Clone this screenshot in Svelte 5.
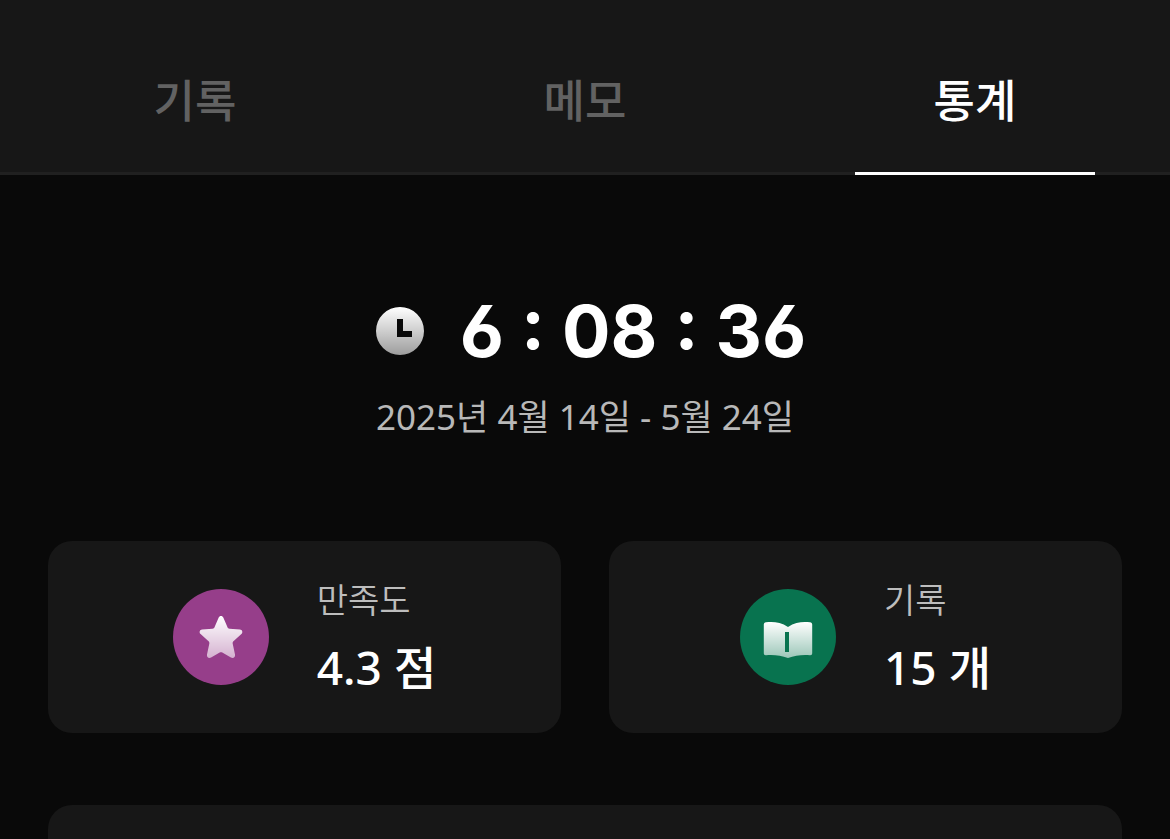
<script>
	let active = $state('stats');

	const tabs = [
		{ id: 'records', label: '기록' },
		{ id: 'memo', label: '메모' },
		{ id: 'stats', label: '통계' }
	];

	const cards = [
		{ icon: 'star', label: '만족도', value: '4.3 점' },
		{ icon: 'book', label: '기록', value: '15 개' }
	];
</script>

<div class="page">
	<div class="tabs" role="tablist">
		{#each tabs as tab}
			<button
				type="button"
				role="tab"
				class="tab"
				class:active={active === tab.id}
				aria-selected={active === tab.id}
				onclick={() => (active = tab.id)}
			>
				<span class="tab-label">{tab.label}</span>
			</button>
		{/each}
	</div>

	<main>
		<section class="summary">
			<div class="timer">
				<svg class="icon" viewBox="0 0 72 72" aria-hidden="true">
					<defs>
						<linearGradient id="clock-fill" x1="0" y1="0" x2="0" y2="1">
							<stop offset="0" stop-color="#fff" />
							<stop offset="1" stop-color="#fff" stop-opacity="0.6" />
						</linearGradient>
					</defs>
					<path
						fill="url(#clock-fill)"
						fill-rule="evenodd"
						d="M36 12a24 24 0 1 0 0 48a24 24 0 1 0 0-48zM33 24h6v12h9v6h-15z"
					/>
				</svg>
				<strong class="time">6 : 08 : 36</strong>
			</div>
			<p class="period">2025년 4월 14일 - 5월 24일</p>
		</section>

		<section class="cards">
			{#each cards as card}
				<article class="card">
					<div class="badge {card.icon}">
						<svg class="icon" viewBox="0 0 72 72" aria-hidden="true">
							{#if card.icon === 'star'}
								<defs>
									<linearGradient id="star-fill" x1="0" y1="0" x2="0" y2="1">
										<stop offset="0" stop-color="#fff" />
										<stop offset="1" stop-color="#fff" stop-opacity="0.6" />
									</linearGradient>
								</defs>
								<path
									fill="url(#star-fill)"
									d="M33.6 16.7C34.5 14.4 37.5 14.4 38.4 16.7L42.4 26.1C42.7 27.1 43.5 27.7 44.5 27.8L54.9 28.6C57.3 28.8 58.2 31.6 56.4 33.1L48.7 39.9C47.8 40.7 47.5 41.6 47.7 42.7L50 53.4C50.5 56.2 48.2 57.8 45.9 56.5L37.3 51.6C36.5 51.1 35.5 51.1 34.7 51.6L26.1 56.5C23.8 57.8 21.5 56.2 22 53.4L24.3 42.7C24.5 41.6 24.2 40.7 23.3 39.9L15.6 33.1C13.8 31.6 14.7 28.8 17.1 28.6L27.5 27.8C28.5 27.7 29.3 27.1 29.6 26.1z"
								/>
							{:else}
								<defs>
									<linearGradient id="book-fill" x1="0" y1="0" x2="0" y2="1">
										<stop offset="0" stop-color="#fff" />
										<stop offset="1" stop-color="#fff" stop-opacity="0.6" />
									</linearGradient>
								</defs>
								<path
									fill="url(#book-fill)"
									fill-rule="evenodd"
									d="M14 21.3C20.5 20.5 28.5 20.8 36 26C43.5 20.8 51.5 20.5 58 21.3C59.5 21.5 60.2 22.3 60.2 23.5V52C60.2 53.5 59.5 54.3 58 54.2C50 53.5 43 54.5 36 57C29 54.5 22 53.5 14 54.2C12.5 54.3 11.8 53.5 11.8 52V23.5C11.8 22.3 12.5 21.5 14 21.3zM33 31v20h4v-20z"
								/>
							{/if}
						</svg>
					</div>
					<dl>
						<dt>{card.label}</dt>
						<dd>{card.value}</dd>
					</dl>
				</article>
			{/each}
		</section>

		<section class="panel"></section>
	</main>
</div>

<style>
	:global(body) {
		margin: 0;
		background: #090909;
	}

	.page {
		min-height: 100vh;
		max-height: 100vh;
		overflow: hidden;
		color: #fff;
		font-family: 'Noto Sans', 'Noto Sans CJK KR', sans-serif;
	}

	.tabs {
		display: grid;
		grid-template-columns: repeat(3, 1fr);
		background: #171717;
		box-shadow: inset 0 -3px #202020;
	}

	.tab {
		display: flex;
		flex-direction: column;
		align-items: center;
		padding: 63px 0 0;
		border: 0;
		background: none;
		color: #626262;
		font-family: 'Noto Sans CJK KR', sans-serif;
		font-size: 45px;
		font-weight: 500;
		line-height: 72px;
		cursor: pointer;
	}

	.tab::after {
		content: '';
		width: 240px;
		height: 3px;
		margin-top: 37px;
	}

	.tab.active {
		color: #fff;
	}

	.tab.active::after {
		background: #fff;
	}

	main {
		padding: 120px 48px 0;
	}

	.summary {
		display: flex;
		flex-direction: column;
		align-items: center;
	}

	.timer {
		display: flex;
		align-items: center;
		gap: 24px;
	}

	.icon {
		display: block;
		width: 72px;
		height: 72px;
	}

	.time {
		font-family: Inter, sans-serif;
		font-size: 72px;
		font-weight: 700;
		font-feature-settings: 'cv03';
		line-height: 72px;
	}

	.period {
		margin: 23px 0 0;
		color: #b8b8b8;
		font-size: 35px;
		font-weight: 400;
		line-height: 54px;
	}

	.cards {
		display: grid;
		grid-template-columns: repeat(2, 1fr);
		gap: 48px;
		margin-top: 97px;
	}

	.card {
		display: flex;
		align-items: center;
		justify-content: center;
		gap: 48px;
		height: 192px;
		border-radius: 24px;
		background: #171717;
	}

	.badge {
		display: flex;
		align-items: center;
		justify-content: center;
		width: 96px;
		height: 96px;
		border-radius: 50%;
	}

	.badge.star {
		background: #963e8a;
	}

	.badge.book {
		background: #08734f;
	}

	dl {
		margin: 0;
		padding-top: 2px;
	}

	dt {
		color: #bdbdbd;
		font-size: 34px;
		font-weight: 350;
		line-height: 54px;
	}

	dd {
		margin: 4px 0 0;
		font-size: 46px;
		font-weight: 500;
		line-height: 72px;
	}

	.panel {
		height: 192px;
		margin-top: 72px;
		border-radius: 24px;
		background: #171717;
	}
</style>
